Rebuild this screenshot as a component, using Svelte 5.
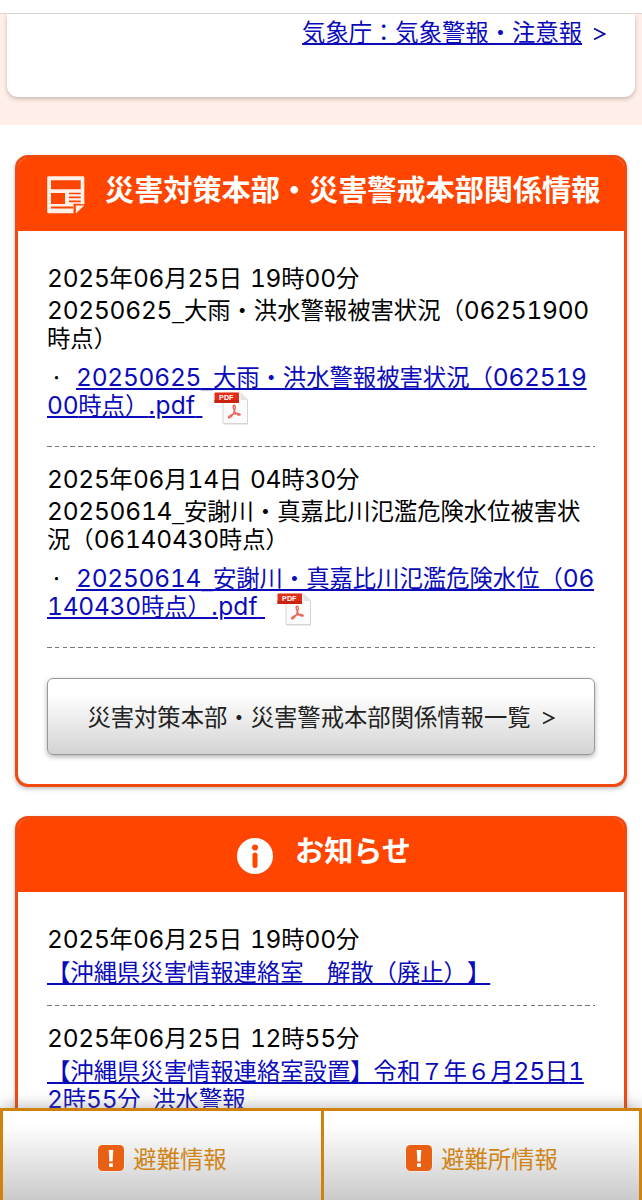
<script>
  const reports = [
    {
      date: '2025年06月25日 19時00分',
      title: ['20250625_大雨・洪水警報被害状況（06251900', '時点）'],
      link: ['20250625_大雨・洪水警報被害状況（062519', '00時点）.pdf ']
    },
    {
      date: '2025年06月14日 04時30分',
      title: ['20250614_安謝川・真嘉比川氾濫危険水位被害状', '況（06140430時点）'],
      link: ['20250614_安謝川・真嘉比川氾濫危険水位（06', '140430時点）.pdf ']
    }
  ];
  const notices = [
    { date: '2025年06月25日 19時00分', link: ['【沖縄県災害情報連絡室　解散（廃止）】'] },
    { date: '2025年06月25日 12時55分', link: ['【沖縄県災害情報連絡室設置】令和７年６月25日1', '2時55分_洪水警報'] }
  ];
  const tabs = ['避難情報', '避難所情報'];

  // Digits and Latin letters are set in a wider face than the kana and kanji.
  const runs = (text) =>
    text.match(/[0-9]+|[a-z.]+|_| |[^0-9a-z._ ]+/g).map((t) => ({
      t,
      kind: /^[0-9]/.test(t) ? 'num' : /^[a-z.]/.test(t) ? 'lat' : t === '_' ? 'bar' : t === ' ' ? 'gap' : 'jp'
    }));
</script>

{#snippet mixed(text)}{#each runs(text) as r}<span class={r.kind}>{r.t}</span>{/each}{/snippet}

{#snippet pdfIcon()}
  <svg class="pdf" width="36" height="34" viewBox="0 0 36 34">
    <path d="M9.5 1.5H27L34 8.5V32.5H9.5Z" fill="#d5d5d5" />
    <path d="M9 1H26.5L33.5 8V31.5H9Z" fill="#fbfbfb" stroke="#d3d3d3" stroke-width=".9" />
    <path d="M26.5 1V8H33.5Z" fill="#e4e4e4" />
    <rect x=".5" y=".5" width="24.5" height="10.5" rx=".8" fill="#e32f17" />
    <rect x=".5" y="8" width="24.5" height="3" fill="#c9230f" />
    <text x="12.3" y="8.3" text-anchor="middle" font-family="Liberation Sans" font-size="7.2" font-weight="700" fill="#fff">PDF</text>
    <path d="M20 13.200c1.800 0 1.300 2.900.6 5.200-1.300 4-4 7.700-5.600 7.500-1.600-.4.800-2.800 4-3.700 3-.9 7-1.200 7.200.2.100 1.200-2.500.8-4-.9-1.700-1.800-3.300-5.500-3-7.300.1-.6.300-1 .8-1Z" fill="none" stroke="#e8685c" stroke-width="1.400" />
  </svg>
{/snippet}

<div class="page">
  <div class="topbar"></div>
  <div class="weather">
    <div class="card">
      <a href="#weather">気象庁：気象警報・注意報</a><svg class="chev" width="13" height="14" viewBox="0 0 13 14"><path d="M1 1.500 11.500 7 1 12.500" fill="none" stroke="#0b0b9c" stroke-width="1.700" /></svg>
    </div>
  </div>

  <main>
    <section>
      <h2>
        <svg class="news" width="38" height="38" viewBox="0 0 38 38">
          <path d="M1.500 .3H36A1.300 1.300 0 0 1 37.300 1.600V28H27V37.300H1.500A1.300 1.300 0 0 1 .2 36V1.600A1.300 1.300 0 0 1 1.500 .3Z" fill="#fff0e8" />
          <g fill="#ff4500">
            <path d="M4 4.300H33.700V13.300H4ZM4 17H18V28H4ZM22 16.800H33.700V18.300H22ZM22 20.500H33.700V22.300H22ZM22 24.500H33.700V26.300H22ZM4 30.500H26V32.500H4Z" />
            <path d="M26.500 27.800H38V38H26.500Z" />
          </g>
          <path d="M28.800 29.500H37.300L28.800 37.500ZM33.700 26H37.300V28.300H33.700Z" fill="#fff0e8" />
        </svg>
        <span>災害対策本部・災害警戒本部関係情報</span>
      </h2>
      <div class="body">
        {#each reports as r}
          <article>
            <p class="date">{@render mixed(r.date)}</p>
            <p class="title">
              {#each r.title as line}<span class="line">{@render mixed(line)}</span>{/each}
            </p>
            <div class="file">
              <div class="line first"><span class="dot">·</span><a href="#pdf">{@render mixed(r.link[0])}</a></div>
              <div class="line second"><a href="#pdf">{@render mixed(r.link[1])}</a>{@render pdfIcon()}</div>
            </div>
          </article>
        {/each}
        <button>災害対策本部・災害警戒本部関係情報一覧<svg class="chev" width="13" height="14" viewBox="0 0 13 14"><path d="M1 1.500 11.500 7 1 12.500" fill="none" stroke="#222" stroke-width="1.700" /></svg></button>
      </div>
    </section>

    <section>
      <h2 class="notice">
        <svg class="info" width="36" height="36" viewBox="0 0 36 36">
          <circle cx="18" cy="18" r="18" fill="#fff" />
          <circle cx="18" cy="9.500" r="3" fill="#ff4500" />
          <rect x="15.500" y="14.500" width="5" height="15.500" rx="2.500" fill="#ff4500" />
        </svg>
        <span>お知らせ</span>
      </h2>
      <div class="body">
        {#each notices as n}
          <article class="short">
            <p class="date">{@render mixed(n.date)}</p>
            <div class="title">
              {#each n.link as line}<a class="line" href="#notice"><span class="u">{@render mixed(line)}</span></a>{/each}
            </div>
          </article>
        {/each}
      </div>
    </section>
  </main>

  <nav>
    {#each tabs as t}
      <a href="#tab">
        <svg width="28" height="28" viewBox="0 0 28 28">
          <rect x=".5" y=".5" width="27" height="27" rx="5" fill="#fff8f0" />
          <rect x="1" y="1" width="26" height="26" rx="4.500" fill="#e95f13" />
          <path d="M11.700 6H16.300L15.600 17.500H12.400Z" fill="#fff" />
          <rect x="12.100" y="19.300" width="3.800" height="3.700" fill="#fff" />
        </svg>
        <span>{t}</span>
      </a>
    {/each}
  </nav>
</div>

<style>
  :global(body) { background: #fff; overflow: hidden; }
  .page {
    height: 1200px;
    overflow: hidden;
    position: relative;
    font-family: "Noto Sans CJK JP", sans-serif;
    font-size: 23.33px;
    line-height: 28px;
    text-spacing-trim: space-all;
    color: #000;
  }
  p, h2 { margin: 0; }
  a { color: #0b0bba; text-decoration-thickness: 1.500px; text-underline-offset: 2px; }
  .topbar { box-sizing: border-box; height: 14px; border-bottom: 1px solid #d9d3d1; }
  .weather { height: 111px; background: #ffefe8; padding: 0 7px; }
  .card {
    box-sizing: border-box;
    height: 83px;
    background: #fff;
    border-radius: 0 0 11px 11px;
    box-shadow: 0 2px 4px rgba(60, 40, 40, .28);
    padding: 3px 29px 0 0;
    text-align: right;
    white-space: nowrap;
    clip-path: inset(0 -7px -10px -7px);
  }
  .card .chev { margin-left: 11px; vertical-align: 0; }
  main { padding: 30px 15px 0; display: flex; flex-direction: column; gap: 29px; }
  section {
    border: 3px solid #f04a10;
    border-radius: 13px;
    box-shadow: 0 2px 4px rgba(0, 0, 0, .25);
    overflow: hidden;
    background: #fff;
  }
  section:last-child { height: 400px; }
  h2 {
    background: #ff4500;
    box-shadow: 0 0 0 3px #ff4500;
    color: #fff;
    height: 70px;
    margin-bottom: 3px;
    display: flex;
    align-items: flex-start;
    font-size: 29.15px;
    line-height: 40px;
    font-weight: 700;
    white-space: nowrap;
  }
  h2 span { margin-top: 10px; }
  .news { margin: 18px 20px 0 29px; flex: none; }
  .notice { justify-content: center; gap: 22px; padding-left: 6px; }
  .info { margin-top: 19px; flex: none; }
  .body { padding: 32px 29px 29px; }
  article {
    box-sizing: border-box;
    height: 184px;
    margin-bottom: 17px;
    background: repeating-linear-gradient(90deg, #777 0 4.500px, transparent 4.500px 7.800px) left bottom / 100% 1.500px no-repeat;
  }
  .short { height: 82px; }
  .short:last-child { height: 150px; }
  .date { height: 28px; margin-bottom: 4px; white-space: nowrap; }
  .short .date { margin-bottom: 5px; }
  .line { display: block; height: 28px; white-space: nowrap; }
  a.line { text-decoration: none; }
  .u { text-decoration: underline; text-decoration-thickness: 1.500px; }
  .file { margin-top: 11px; }
  .first { display: flex; }
  .dot { flex: none; width: 29px; padding-left: 3px; box-sizing: border-box; }
  .second { display: flex; align-items: flex-start; }
  .second a { white-space: pre; }
  .pdf { margin: 2px 0 0 12px; flex: none; }
  .num, .lat, .bar, .gap { font-family: Inter, "Liberation Sans", sans-serif; line-height: 0; white-space: pre; }
  .num { font-size: 24.500px; font-feature-settings: "tnum"; letter-spacing: -.24px; }
  .lat { font-size: 24.5px; letter-spacing: .2px; }
  .bar { font-family: "Liberation Sans", Arial, sans-serif; font-size: 21px; }
  .gap { font-family: "Liberation Sans", Arial, sans-serif; font-size: 28px; }
  .second .gap { font-size: 26px; }
  button {
    box-sizing: border-box;
    width: 100%;
    height: 77px;
    margin-top: 30px;
    display: flex;
    align-items: center;
    justify-content: center;
    border: 1.500px solid #999;
    border-radius: 6px;
    background: linear-gradient(#fff 20%, #d3d3d3);
    box-shadow: 0 2px 5px rgba(0, 0, 0, .3);
    font: inherit;
    color: #222;
    padding: 0 0 2px;
    white-space: nowrap;
  }
  button .chev { margin: 4px 0 0 11px; }
  nav {
    position: absolute;
    left: 0;
    right: 0;
    bottom: 0;
    height: 92px;
    box-sizing: border-box;
    display: grid;
    grid-template-columns: 318px 315px;
    column-gap: 3px;
    border: 3px solid #d0820f;
    border-bottom: 0;
    background: #d0820f;
    box-shadow: 0 -2px 14px rgba(110, 110, 110, .45);
  }
  nav a {
    display: flex;
    align-items: center;
    justify-content: center;
    gap: 8px;
    padding-top: 4px;
    background: linear-gradient(#fff 15%, #cacaca);
    color: #d08416;
    text-decoration: none;
  }
  nav svg { flex: none; }
</style>
